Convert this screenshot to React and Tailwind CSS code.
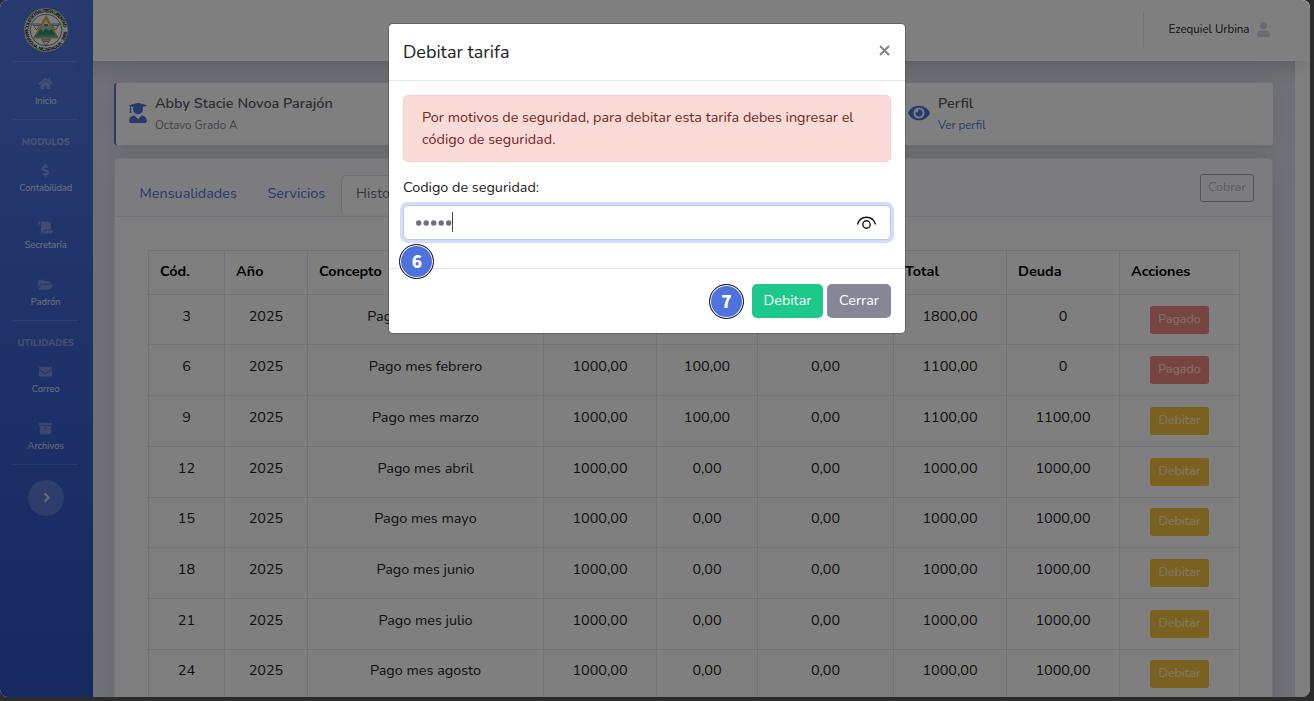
import React from "react";
import {
  FaHome, FaDollarSign, FaScroll, FaFolderOpen, FaEnvelope, FaArchive,
  FaAngleRight, FaUser, FaUserGraduate, FaEye,
} from "react-icons/fa";

const rows = [
  ["3", "2025", "Pago de matricula", "1800,00", "0,00", "0,00", "1800,00", "0", true],
  ["6", "2025", "Pago mes febrero", "1000,00", "100,00", "0,00", "1100,00", "0", true],
  ["9", "2025", "Pago mes marzo", "1000,00", "100,00", "0,00", "1100,00", "1100,00", false],
  ["12", "2025", "Pago mes abril", "1000,00", "0,00", "0,00", "1000,00", "1000,00", false],
  ["15", "2025", "Pago mes mayo", "1000,00", "0,00", "0,00", "1000,00", "1000,00", false],
  ["18", "2025", "Pago mes junio", "1000,00", "0,00", "0,00", "1000,00", "1000,00", false],
  ["21", "2025", "Pago mes julio", "1000,00", "0,00", "0,00", "1000,00", "1000,00", false],
  ["24", "2025", "Pago mes agosto", "1000,00", "0,00", "0,00", "1000,00", "1000,00", false],
];
const heads = ["Cód.", "Año", "Concepto", "Monto", "Mora", "Descuento", "Total", "Deuda", "Acciones"];
const cols = "grid grid-cols-[76px_83px_236px_113px_101px_136px_113px_113px_120px] w-[1092px]";

function Seal() {
  return (
    <svg className="h-[46px] w-[46px]" viewBox="0 0 46 46">
      <defs>
        <path id="ringTop" d="M5.3 23a17.7 17.7 0 0 1 35.4 0" />
        <path id="ringBottom" d="M1.9 23a21.1 21.1 0 0 0 42.2 0" />
      </defs>
      <circle cx="23" cy="23" r="22" fill="#f4f6f2" stroke="#5f9a8f" strokeWidth="0.8" />
      <circle cx="23" cy="23" r="15.8" fill="#fdfdfd" stroke="#4f8b83" strokeWidth="1" />
      <g fill="#111" fontFamily="Liberation Sans, sans-serif" fontWeight="700" fontSize="4.8">
        <text><textPath href="#ringTop" textLength="53">COLEGIO BAUTISTA LIBERTAD</textPath></text>
        <text><textPath href="#ringBottom" textLength="64">MANAGUA, NICARAGUA · 2000</textPath></text>
      </g>
      <g fill="none" stroke="#555" strokeWidth="0.7">
        <path d="M9.5 17h8l-4 6zM28.500 17h8l-4 6zM19 33h8l-4 6z" />
        <path d="M11 18.500h5M30 18.500h5M18 32h10M20.500 34.500h5" />
      </g>
      <path d="M23 9.500 34.500 30.500h-23z" fill="#8fc7e6" stroke="#d9a62c" strokeWidth="1.8" />
      <path d="m23 12.500 3.200 6h-6.400z" fill="#f3e6c0" />
      <path d="M21 17h4v2.200h-4z" fill="#e24a3a" />
      <path d="m13.500 28 4-6 2.500 2.500 3-3.500 3 3 2.500-2 4 6z" fill="#2f9a4c" />
      <path d="M12.700 28h20.600l1 2H11.700z" fill="#39a4d8" />
    </svg>
  );
}

const Rule = () => <div className="h-px w-[65px] shrink-0 bg-white/15" />;

function NavItem({ icon: Icon, label }) {
  return (
    <div className="flex h-[57px] w-full shrink-0 flex-col items-center pt-[14.600px]">
      <Icon className="h-[13px] w-[15px] text-white/30" />
      <span className="mt-[4px] text-[9.360px] leading-[14px] text-white/80">{label}</span>
    </div>
  );
}

const Heading = ({ children }) => (
  <div className="h-[14px] text-[9.360px] leading-[14px] font-extrabold text-white/40">{children}</div>
);

function Sidebar() {
  return (
    <aside className="flex h-[697px] w-[93px] shrink-0 flex-col items-center bg-gradient-to-b from-[#4e73df] from-10% to-[#2a50c0] pr-[1.500px]">
      <div className="flex h-[61px] items-start pt-[7px]"><Seal /></div>
      <Rule />
      <NavItem icon={FaHome} label="Inicio" />
      <Rule />
      <div className="pt-[15px]"><Heading>MODULOS</Heading></div>
      <NavItem icon={FaDollarSign} label="Contabilidad" />
      <NavItem icon={FaScroll} label="Secretaría" />
      <NavItem icon={FaFolderOpen} label="Padrón" />
      <Rule />
      <div className="pt-[15px]"><Heading>UTILIDADES</Heading></div>
      <NavItem icon={FaEnvelope} label="Correo" />
      <NavItem icon={FaArchive} label="Archivos" />
      <Rule />
      <div className="mt-[15px] flex h-9 w-9 items-center justify-center rounded-full bg-white/20">
        <FaAngleRight className="mb-[2px] ml-[2px] h-[15px] w-[14px] text-white/60" />
      </div>
    </aside>
  );
}

function Topbar() {
  return (
    <header className="relative flex h-[61px] items-start bg-white pt-3 shadow-[0_2px_25px_rgba(58,59,69,0.15)]">
      <div className="ml-[1050px] h-[35px] w-px bg-[#e3e6f0]" />
      <div className="mt-[9px] ml-[24.500px] flex items-center">
        <span className="w-[81px] text-[11.520px] leading-4 whitespace-nowrap text-[#222]">Ezequiel Urbina</span>
        <FaUser className="ml-[7.500px] h-[15px] w-[13px] text-[#d1d3e2]" />
      </div>
    </header>
  );
}

function StudentCard() {
  return (
    <section className="flex h-[62px] w-[1159px] rounded-[3px] border-l-2 border-[#4e73df] bg-white shadow-[0_2px_25px_rgba(58,59,69,0.15)]">
      <FaUserGraduate className="mt-[20px] ml-[13px] h-[20px] w-[18px] text-[#4e73df]" />
      <div className="mt-[10px] ml-[8px] w-[753px]">
        <div className="text-[14.400px] leading-5 font-semibold text-[#5a5c69]">Abby Stacie Novoa Parajón</div>
        <div className="mt-[3px] text-[11.520px] leading-[18px] text-[#858796]">Octavo Grado A</div>
      </div>
      <FaEye className="mt-[20px] h-[20px] w-[22px] text-[#4e73df]" />
      <div className="mt-[10px] ml-[8px]">
        <div className="text-[14.400px] leading-5 font-semibold text-[#5a5c69]">Perfil</div>
        <div className="mt-[3px] text-[11.520px] leading-[18px] text-[#4e73df]">Ver perfil</div>
      </div>
    </section>
  );
}

function FeesTable() {
  return (
    <div className="mt-[33px] ml-[33px] w-[1092px] border-t border-[#e3e6f0] text-[14.400px] text-[#1c1c1c]">
      <div className={cols + " h-[42.750px] border-l border-[#e3e6f0]"}>
        {heads.map((h) => (
          <div key={h} className="border-r border-[#e3e6f0] pt-[9px] pl-[11px] leading-[22px] font-bold text-black">{h}</div>
        ))}
      </div>
      {rows.map((r) => (
        <div key={r[0]} className={cols + " h-[50.700px] border-t border-l border-[#e3e6f0]"}>
          {r.slice(0, 8).map((c, i) => (
            <div key={i} className="border-r border-[#e3e6f0] pt-[9.800px] text-center leading-[22px]">{c}</div>
          ))}
          <div className="flex justify-center border-r border-[#e3e6f0] pt-[10.900px]">
            <span className={"h-[28px] w-[59px] rounded-[3px] text-center text-[12.600px] leading-[26.600px] text-white/80 " + (r[8] ? "bg-[#ef8980]" : "bg-[#f6c23e]")}>
              {r[8] ? "Pagado" : "Debitar"}
            </span>
          </div>
        </div>
      ))}
    </div>
  );
}

function MainCard() {
  return (
    <section className="mt-[13px] h-[560px] w-[1159px] rounded-t-[5px] border border-[#e3e6f0] bg-white shadow-[0_2px_25px_rgba(58,59,69,0.15)]">
      <div className="flex h-[58px] items-start rounded-t-[5px] border-b border-[#e3e6f0] bg-[#f8f9fc] text-[14.400px] text-[#4e73df]">
        <span className="mt-[23px] ml-[24.500px] w-[98px] leading-[22px]">Mensualidades</span>
        <span className="mt-[23px] ml-[30px] w-[58px] leading-[22px]">Servicios</span>
        <span className="mt-[16px] ml-[15.500px] h-[38px] w-[90px] rounded-t-[5px] border border-b-0 border-[#dddfeb] bg-white pt-[6px] pl-[14px] leading-[22px] text-[#6e707e]">Historial</span>
        <span className="mt-[15px] mr-[18px] ml-auto h-[28px] w-[54px] rounded-[3px] border border-[#a9a9a9] text-center text-[12.600px] leading-[24px] text-[#b8b9c0]">Cobrar</span>
      </div>
      <FeesTable />
    </section>
  );
}

const Step = ({ children }) => (
  <span className="flex h-[35px] w-[35px] items-center justify-center rounded-full border-[1.500px] border-[#111] bg-[#4e73df] pb-[2px] font-['Noto_Sans_CJK_SC',sans-serif] text-[17px] leading-[17px] font-black text-white shadow-[inset_0_0_0_1px_#fff]">{children}</span>
);

function DebitDialog() {
  return (
    <div role="dialog" className="absolute top-[23px] left-[388px] flex h-[311px] w-[518px] flex-col rounded-[5px] border border-black/20 bg-white bg-clip-padding">
      <div className="flex h-[57px] shrink-0 items-start justify-between border-b border-[#e3e6f0] pt-[15px] pr-[15px] pl-[14px]">
        <h5 className="text-[18px] leading-[27px] text-[#222]">Debitar tarifa</h5>
        <svg className="mt-[5.500px] h-[11px] w-[11px]" viewBox="0 0 11 11"><path d="m1 1 9 9M10 1l-9 9" stroke="#808080" strokeWidth="2" /></svg>
      </div>
      <div className="h-[187px] px-[14px] pt-[14px]">
        <p className="h-[67px] rounded-[5px] border border-[#f8ccc8] bg-[#fadbd8] pt-[10px] pl-[18px] text-[14.400px] leading-[22px] text-[#78261f]">
          Por motivos de seguridad, para debitar esta tarifa debes ingresar el<br />código de seguridad.
        </p>
        <label className="mt-[14px] block text-[14.400px] leading-[22px] text-[#222]">Codigo de seguridad:</label>
        <div className="mt-[7px] flex h-[35px] items-center rounded-[5px] border border-[#bac8f3] bg-white pl-[12px] shadow-[0_0_0_3px_#d3dcf8]">
          <svg className="mt-[1px] h-[6px] w-[36px]" viewBox="0 0 36 6" fill="#6e707e">
            {[2.7, 10.2, 17.7, 25.2, 32.7].map((x) => <circle key={x} cx={x} cy="3" r="2.700" />)}
          </svg>
          <i className="mb-[2px] h-[20px] w-px bg-[#444]" />
          <svg className="mr-[14px] ml-auto h-[14px] w-[20px]" viewBox="0 0 20 14" fill="none" stroke="#111" strokeWidth="1.400">
            <path d="M1.500 8.500C2.700 4 6 1.300 10.500 1.300S18.300 4 19.500 8.500" />
            <circle cx="10.500" cy="8.500" r="3.700" />
          </svg>
        </div>
      </div>
      <div className="flex h-[65px] items-start justify-end border-t border-[#e3e6f0] pt-[15px] pr-[14px] text-[14.400px] leading-[32px] text-white">
        <span className="mr-[8px]"><Step>7</Step></span>
        <button className="mr-[4px] flex h-[34px] w-[71px] justify-center rounded-[5px] bg-[#1cc88a]">Debitar</button>
        <button className="flex h-[34px] w-[64px] justify-center rounded-[5px] bg-[#858796]">Cerrar</button>
      </div>
      <div className="absolute top-[219.500px] left-[10.400px]"><Step>6</Step></div>
    </div>
  );
}

export default function App() {
  return (
    <div className="h-[701px] w-[1314px] overflow-hidden bg-[#2b2b2b] font-['Nunito','Lato',sans-serif]">
      <div className="relative flex h-[697px] w-[1310px] overflow-hidden rounded-[8px] bg-white">
        <Sidebar />
        <div className="flex w-[1217px] flex-col">
          <Topbar />
          <main className="h-[636px] w-[1202px] overflow-hidden bg-[#e3e6f0] pt-[22px] pl-[21px] shadow-[inset_0_14px_22px_-12px_rgba(58,59,69,0.2)]">
            <StudentCard />
            <MainCard />
          </main>
        </div>
        <div className="absolute inset-0 bg-black/50" />
        <DebitDialog />
      </div>
    </div>
  );
}
